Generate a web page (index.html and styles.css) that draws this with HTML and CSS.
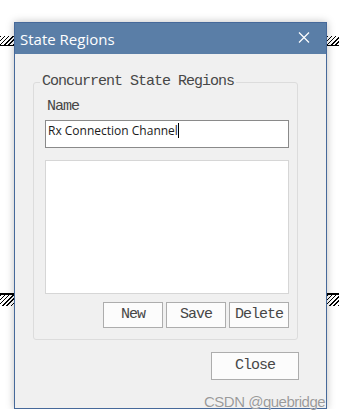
FILE: index.html
```html
<!DOCTYPE html>
<html lang="en">
<head>
    <meta charset="UTF-8">
    <meta name="viewport" content="width=device-width, initial-scale=1.0">
    <title>State Regions</title>
    <link rel="stylesheet" href="styles.css">
</head>
<body>
    <!-- diagram shapes behind the dialog -->
    <div class="hatch hatch-top hatch-left"></div>
    <div class="hatch hatch-top hatch-right"></div>
    <div class="hatch hatch-bottom hatch-left"></div>
    <div class="hatch hatch-bottom hatch-right"></div>

    <div class="dialog">
        <div class="titlebar">
            <span class="title">State Regions</span>
            <svg class="close-x" width="12" height="11" viewBox="0 0 12 11">
                <path d="M1 0.5 L11 10.5 M11 0.5 L1 10.5" stroke="#fff" stroke-width="1.2" fill="none"/>
            </svg>
        </div>
        <div class="dialog-body">
            <fieldset class="group">
                <legend>Concurrent State Regions</legend>
                <div class="group-inner">
                    <label class="field-label">Name</label>
                    <div class="text-input">Rx Connection Channel<span class="caret"></span></div>
                    <div class="list-box"></div>
                    <div class="btn-row">
                        <button class="btn">New</button>
                        <button class="btn">Save</button>
                        <button class="btn">Delete</button>
                    </div>
                </div>
            </fieldset>
            <div class="footer">
                <button class="btn btn-close">Close</button>
            </div>
        </div>
    </div>

    <div class="watermark">CSDN @quebridge</div>
</body>
</html>
```

FILE: styles.css
```css
body {
    margin: 0;
    background: #fff;
    font-family: "Open Sans", "Noto Sans", sans-serif;
}
.hatch {
    position: absolute;
    width: 14px;
    height: 9px;
    background: repeating-linear-gradient(135deg, #000 0 1px, #fff 1px 3px);
}
.hatch-top {
    top: 36px;
    border-bottom: 1px solid #000;
}
.hatch-bottom {
    top: 293px;
    height: 11px;
    border-top: 2px solid #000;
}
.hatch-left {
    left: 0;
}
.hatch-right {
    right: 0;
    width: 12px;
}
.dialog {
    position: relative;
    z-index: 1;
    margin: 22px 0 0 14px;
    width: 313px;
    border: 1px solid #46699a;
    box-sizing: border-box;
    box-shadow: 0 0 8px rgba(0, 0, 0, 0.25);
}
.titlebar {
    display: flex;
    justify-content: space-between;
    align-items: flex-start;
    height: 31px;
    background: #5a7ea7;
    color: #fff;
}
.title {
    font-size: 15px;
    line-height: 20px;
    padding: 6px 0 0 5px;
}
.close-x {
    margin: 9px 16px 0 0;
}
.dialog-body {
    background: #f0f0f0;
    height: 354px;
    padding: 20px 27px 0 18px;
    box-sizing: border-box;
}
.group {
    margin: 0;
    padding: 0;
    width: 265px;
    box-sizing: border-box;
    border: 1px solid #dcdcdc;
    border-radius: 3px;
}
legend,
.field-label,
.btn {
    font-family: "Liberation Mono", "Courier New", monospace;
    font-size: 15px;
    font-weight: 400;
    letter-spacing: -1px;
    color: #474747;
}
legend {
    margin-left: 6px;
    padding: 0 2px;
    line-height: 16px;
}
.group-inner {
    padding: 0 8px 11px 11px;
}
.field-label {
    display: block;
    margin-top: 9px;
    padding-left: 2px;
    line-height: 16px;
}
.text-input {
    margin-top: 5px;
    height: 28px;
    box-sizing: border-box;
    border: 1px solid #8a8a8a;
    background: #fff;
    padding: 0 2px;
    font-size: 12px;
    line-height: 20px;
    color: #1a1a1a;
}
.caret {
    display: inline-block;
    width: 1px;
    height: 15px;
    background: #000;
    vertical-align: -3px;
}
.list-box {
    margin-top: 12px;
    height: 134px;
    box-sizing: border-box;
    border: 1px solid #d6d6d6;
    background: #fff;
}
.btn-row {
    display: flex;
    justify-content: flex-end;
    gap: 3px;
    margin-top: 8px;
}
.btn {
    width: 60px;
    height: 26px;
    padding: 0;
    border: 1px solid #adadad;
    background: #fcfcfc;
    line-height: 24px;
}
.footer {
    display: flex;
    justify-content: flex-end;
    margin-top: 12px;
}
.btn-close {
    width: 88px;
    height: 28px;
}
.watermark {
    position: absolute;
    z-index: 2;
    left: 204px;
    top: 393px;
    font-family: "Liberation Sans", Arial, sans-serif;
    font-size: 15px;
    letter-spacing: -0.5px;
    line-height: 17px;
    color: #9a9a9a;
    text-shadow: 0 0 1px #fff;
}
```
